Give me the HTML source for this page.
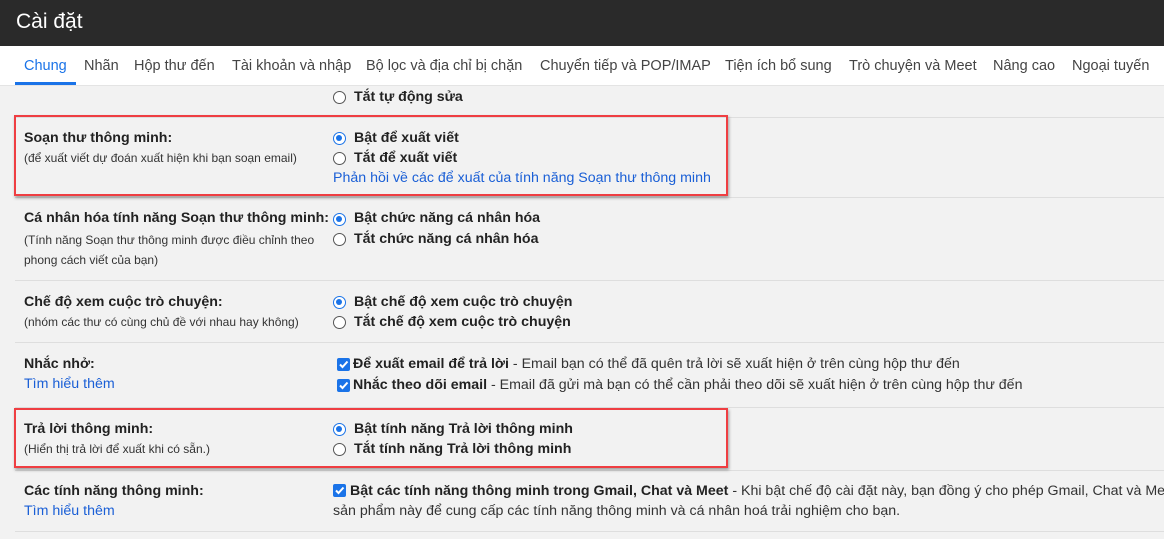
<!DOCTYPE html>
<html><head><meta charset="utf-8">
<style>
*{margin:0;padding:0;box-sizing:border-box}
body{width:1164px;height:539px;overflow:hidden;background:#f2f2f2;font-family:"Liberation Sans","Noto Sans CJK SC",sans-serif;color:#222;position:relative}
.hdr{position:absolute;left:0;top:0;width:1164px;height:46px;background:#2a2a2a;color:#fff;font-size:21px;padding:10px 0 0 16px}
.tabs{position:absolute;left:0;top:46px;width:1164px;height:40px;background:#fff;border-bottom:1px solid #e4e4e4}
.tab{position:absolute;top:12px;font-size:14.5px;color:#444;white-space:nowrap}
.ul{position:absolute;left:15px;top:82px;width:61px;height:3px;background:#1a73e8}
.t{position:absolute;white-space:nowrap}
.lb{font-size:14.2px;font-weight:bold;color:#222}
.sub{font-size:12px;color:#333}
.opt{font-size:14.2px;font-weight:bold;color:#222}
.lnk{font-size:14.2px;color:#1a5fd6}
.desc{font-weight:normal;color:#333}
.sep{position:absolute;left:15px;width:1149px;height:1px;background:#dedede}
.rad{position:absolute;width:13px;height:13px;border:1px solid #555;border-radius:50%;background:#fff}
.rad.on{border:1.5px solid #1a73e8}
.rad.on::after{content:"";position:absolute;left:2px;top:2px;width:6px;height:6px;border-radius:50%;background:#1a73e8}
.cb{position:absolute;width:13px;height:13px;background:#1a73e8;border-radius:2px}
.cb svg{position:absolute;left:0;top:0}
.box{position:absolute;border:2.5px solid #ef3e42;box-shadow:1px 2px 3px rgba(0,0,0,.35)}
</style></head><body>
<div class="hdr">Cài đặt</div>
<div class="tabs">
<span class="tab" style="left:24px;color:#1a73e8">Chung</span>
<span class="tab" style="left:84px">Nhãn</span>
<span class="tab" style="left:134px">Hộp thư đến</span>
<span class="tab" style="left:232px">Tài khoản và nhập</span>
<span class="tab" style="left:366px">Bộ lọc và địa chỉ bị chặn</span>
<span class="tab" style="left:540px">Chuyển tiếp và POP/IMAP</span>
<span class="tab" style="left:725px">Tiện ích bổ sung</span>
<span class="tab" style="left:849px">Trò chuyện và Meet</span>
<span class="tab" style="left:993px">Nâng cao</span>
<span class="tab" style="left:1072px">Ngoại tuyến</span>
</div>
<div class="ul"></div>

<div class="rad" style="left:333px;top:91px"></div><span class="t opt" style="left:354px;top:89px">Tắt tự động sửa</span>
<div class="sep" style="top:117px"></div>

<span class="t lb" style="left:24px;top:130px">Soạn thư thông minh:</span>
<span class="t sub" style="left:24px;top:151px">(để xuất viết dự đoán xuất hiện khi bạn soạn email)</span>
<div class="rad on" style="left:333px;top:132px"></div><span class="t opt" style="left:354px;top:130px">Bật để xuất viết</span>
<div class="rad" style="left:333px;top:152px"></div><span class="t opt" style="left:354px;top:150px">Tắt để xuất viết</span>
<span class="t lnk" style="left:333px;top:170px">Phản hồi về các để xuất của tính năng Soạn thư thông minh</span>
<div class="sep" style="top:197px"></div>

<span class="t lb" style="left:24px;top:210px">Cá nhân hóa tính năng Soạn thư thông minh:</span>
<span class="t sub" style="left:24px;top:233px">(Tính năng Soạn thư thông minh được điều chỉnh theo</span>
<span class="t sub" style="left:24px;top:253px">phong cách viết của bạn)</span>
<div class="rad on" style="left:333px;top:213px"></div><span class="t opt" style="left:354px;top:210px">Bật chức năng cá nhân hóa</span>
<div class="rad" style="left:333px;top:233px"></div><span class="t opt" style="left:354px;top:231px">Tắt chức năng cá nhân hóa</span>
<div class="sep" style="top:280px"></div>

<span class="t lb" style="left:24px;top:294px">Chế độ xem cuộc trò chuyện:</span>
<span class="t sub" style="left:24px;top:315px">(nhóm các thư có cùng chủ đề với nhau hay không)</span>
<div class="rad on" style="left:333px;top:296px"></div><span class="t opt" style="left:354px;top:294px">Bật chế độ xem cuộc trò chuyện</span>
<div class="rad" style="left:333px;top:316px"></div><span class="t opt" style="left:354px;top:314px">Tắt chế độ xem cuộc trò chuyện</span>
<div class="sep" style="top:342px"></div>

<span class="t lb" style="left:24px;top:356px">Nhắc nhở:</span>
<span class="t lnk" style="left:24px;top:376px">Tìm hiểu thêm</span>
<div class="cb" style="left:337px;top:358px"><svg width="13" height="13"><path d="M3 6.5l2.5 2.5L10.5 3.5" stroke="#fff" stroke-width="2" fill="none"/></svg></div>
<span class="t opt" style="left:353px;top:356px">Để xuất email để trả lời <span class="desc">- Email bạn có thể đã quên trả lời sẽ xuất hiện ở trên cùng hộp thư đến</span></span>
<div class="cb" style="left:337px;top:379px"><svg width="13" height="13"><path d="M3 6.5l2.5 2.5L10.5 3.5" stroke="#fff" stroke-width="2" fill="none"/></svg></div>
<span class="t opt" style="left:353px;top:377px">Nhắc theo dõi email <span class="desc">- Email đã gửi mà bạn có thể cần phải theo dõi sẽ xuất hiện ở trên cùng hộp thư đến</span></span>
<div class="sep" style="top:407px"></div>

<span class="t lb" style="left:24px;top:421px">Trả lời thông minh:</span>
<span class="t sub" style="left:24px;top:442px">(Hiển thị trả lời để xuất khi có sẵn.)</span>
<div class="rad on" style="left:333px;top:423px"></div><span class="t opt" style="left:354px;top:421px">Bật tính năng Trả lời thông minh</span>
<div class="rad" style="left:333px;top:443px"></div><span class="t opt" style="left:354px;top:441px">Tắt tính năng Trả lời thông minh</span>
<div class="sep" style="top:470px"></div>

<span class="t lb" style="left:24px;top:483px">Các tính năng thông minh:</span>
<span class="t lnk" style="left:24px;top:503px">Tìm hiểu thêm</span>
<div class="cb" style="left:333px;top:484px"><svg width="13" height="13"><path d="M3 6.5l2.5 2.5L10.5 3.5" stroke="#fff" stroke-width="2" fill="none"/></svg></div>
<span class="t opt" style="left:350px;top:483px">Bật các tính năng thông minh trong Gmail, Chat và Meet <span class="desc">- Khi bật chế độ cài đặt này, bạn đồng ý cho phép Gmail, Chat và Meet</span></span>
<span class="t opt desc" style="left:333px;top:503px">sản phẩm này để cung cấp các tính năng thông minh và cá nhân hoá trải nghiệm cho bạn.</span>
<div class="sep" style="top:531px"></div>

<div class="box" style="left:14px;top:115px;width:714px;height:81px"></div>
<div class="box" style="left:14px;top:408px;width:714px;height:60px"></div>
</body></html>
